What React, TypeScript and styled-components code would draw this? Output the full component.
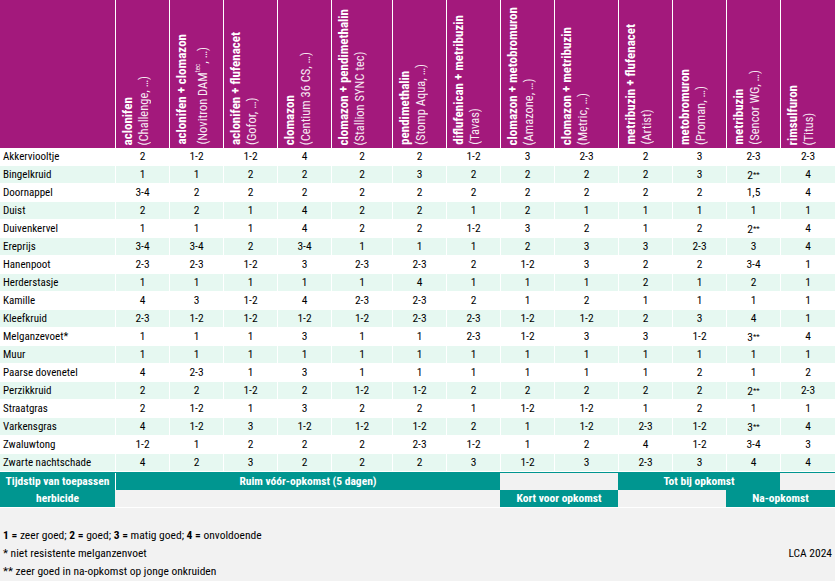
import React from 'react';
import styled, { createGlobalStyle } from 'styled-components';

const GlobalStyle = createGlobalStyle`
  body {
    margin: 0;
    background: #f2f2f2;
    font-family: Roboto, "Liberation Sans", sans-serif;
    font-stretch: 75%;
    color: #000;
  }
`;

const colTemplate = '115px 54px 54px 54px 54px 61px 54px 54px 54px 64px 54px 54px 54px 55px';

const Sheet = styled.div`
    width: 835px;
`

const HeadRow = styled.div`
    display: grid;
    grid-template-columns: ${colTemplate};
    grid-template-rows: 148px;
    height: 148px;
`

const Corner = styled.div`
    background: #a3197c;
`

const HeadCell = styled.div`
    background: #a3197c;
    border-left: 1px solid #fff;
    display: flex;
    align-items: flex-end;
    padding: 0 0 3px 4px;
    min-height: 0;
    overflow: hidden;
`

const Vertical = styled.div`
    writing-mode: vertical-rl;
    transform: rotate(180deg);
    white-space: nowrap;
    line-height: 16px;
    color: #fff;
`

const Agent = styled.span`
    display: block;
    font-weight: bold;
    font-size: 13px;
`

const Product = styled.span`
    display: block;
    font-size: 12.5px;
    color: #f7eaf3;

    sup {
        font-size: 7px;
    }
`

const Row = styled.div<{ $alt: boolean }>`
    display: grid;
    grid-template-columns: ${colTemplate};
    height: 18px;
    box-sizing: border-box;
    border-bottom: 1px solid #fff;
    background: ${props => props.$alt ? '#e6f8f1' : '#fff'};
`

const Label = styled.div`
    padding-left: 3px;
    font-size: 11px;
    line-height: 17px;
    white-space: nowrap;
`

const Value = styled.div`
    border-left: 1px solid #fff;
    text-align: center;
    font-size: 11.5px;
    line-height: 17px;
    white-space: nowrap;
`

const Stars = styled.span`
    font-size: 8px;
    vertical-align: 2px;
`

const Footer = styled.div`
    display: grid;
    grid-template-columns: ${colTemplate};
    grid-template-rows: 17px 17px;
    border-top: 1px solid #009690;
    border-bottom: 1px solid #fff;
`

const Band = styled.div<{ $col: string; $row: string; $on?: boolean; $divider?: boolean }>`
    grid-column: ${props => props.$col};
    grid-row: ${props => props.$row};
    background: ${props => props.$on ? '#009690' : 'transparent'};
    border-left: ${props => props.$divider ? '1px solid #fff' : 'none'};
    color: #fff;
    font-weight: bold;
    font-size: 11.5px;
    line-height: 17px;
    text-align: center;
    white-space: nowrap;
`

const Legend = styled.div`
    padding: 18px 3px 0 3px;
    font-size: 11.5px;
    line-height: 18px;
`

const LegendLine = styled.div`
    display: flex;
    justify-content: space-between;
`

const columns: [string, React.ReactNode][] = [
    ['aclonifen', '(Challenge, …)'],
    ['aclonifen + clomazon', <>(Novitron DAM<sup>tec</sup>, …)</>],
    ['aclonifen + flufenacet', '(Gofor, …)'],
    ['clomazon', '(Centium 36 CS, …)'],
    ['clomazon + pendimethalin', '(Stallion SYNC tec)'],
    ['pendimethalin', '(Stomp Aqua, …)'],
    ['diflufenican + metribuzin', '(Tavas)'],
    ['clomazon + metobromuron', '(Amazone, …)'],
    ['clomazon + metribuzin', '(Metric, …)'],
    ['metribuzin + flufenacet', '(Artist)'],
    ['metobromuron', '(Proman, …)'],
    ['metribuzin', '(Sencor WG, …)'],
    ['rimsulfuron', '(Titus)'],
];

const weeds: [string, string][] = [
    ['Akkerviooltje', '2 1-2 1-2 4 2 2 1-2 3 2-3 2 3 2-3 2-3'],
    ['Bingelkruid', '1 1 2 2 2 3 2 2 2 2 3 2** 4'],
    ['Doornappel', '3-4 2 2 2 2 2 2 2 2 2 2 1,5 4'],
    ['Duist', '2 2 1 4 2 2 1 2 1 1 1 1 1'],
    ['Duivenkervel', '1 1 1 4 2 2 1-2 3 2 1 2 2** 4'],
    ['Ereprijs', '3-4 3-4 2 3-4 1 1 1 2 3 3 2-3 3 4'],
    ['Hanenpoot', '2-3 2-3 1-2 3 2-3 2-3 2 1-2 3 2 2 3-4 1'],
    ['Herderstasje', '1 1 1 1 1 4 1 1 1 2 1 2 1'],
    ['Kamille', '4 3 1-2 4 2-3 2-3 2 1 2 1 1 1 1'],
    ['Kleefkruid', '2-3 1-2 1-2 1-2 1-2 2-3 2-3 1-2 1-2 2 3 4 1'],
    ['Melganzevoet*', '1 1 1 3 1 1 2-3 1-2 3 3 1-2 3** 4'],
    ['Muur', '1 1 1 1 1 1 1 1 1 1 1 1 1'],
    ['Paarse dovenetel', '4 2-3 1 3 1 1 1 1 1 1 2 1 2'],
    ['Perzikkruid', '2 2 1-2 2 1-2 1-2 2 2 2 2 2 2** 2-3'],
    ['Straatgras', '2 1-2 1 3 2 2 1 1-2 1-2 1 2 1 1'],
    ['Varkensgras', '4 1-2 3 1-2 1-2 1-2 2 1 1-2 2-3 1-2 3** 4'],
    ['Zwaluwtong', '1-2 1 2 2 2 2-3 1-2 1 2 4 1-2 3-4 3'],
    ['Zwarte nachtschade', '4 2 3 2 2 2 3 1-2 3 2-3 3 4 4'],
];

const Score: React.FC<{ value: string }> = ({ value }) => {
    if (value.endsWith('**')) {
        return <>{value.slice(0, -2)}<Stars>**</Stars></>
    }
    return <>{value}</>
}

const App: React.FC = () => {
    return (
        <Sheet>
            <GlobalStyle />
            <HeadRow>
                <Corner />
                {columns.map(([agent, product]) => (
                    <HeadCell key={agent}>
                        <Vertical>
                            <Agent>{agent}</Agent>
                            <Product>{product}</Product>
                        </Vertical>
                    </HeadCell>
                ))}
            </HeadRow>

            {weeds.map(([name, scores], i) => (
                <Row key={name} $alt={i % 2 === 1}>
                    <Label>{name}</Label>
                    {scores.split(' ').map((s, j) => (
                        <Value key={j}><Score value={s} /></Value>
                    ))}
                </Row>
            ))}

            <Footer>
                <Band $col="1" $row="1 / 3" $on>Tijdstip van toepassen<br />herbicide</Band>
                <Band $col="2 / 9" $row="1" $on $divider>Ruim vóór-opkomst (5 dagen)</Band>
                <Band $col="9 / 11" $row="1" />
                <Band $col="11 / 14" $row="1" $on>Tot bij opkomst</Band>
                <Band $col="14" $row="1" />
                <Band $col="2 / 9" $row="2" />
                <Band $col="9 / 11" $row="2" $on>Kort voor opkomst</Band>
                <Band $col="11 / 13" $row="2" />
                <Band $col="13 / 15" $row="2" $on>Na-opkomst</Band>
            </Footer>

            <Legend>
                <LegendLine>
                    <span><b>1 =</b> zeer goed; <b>2 =</b> goed; <b>3 =</b> matig goed; <b>4 =</b> onvoldoende</span>
                </LegendLine>
                <LegendLine>
                    <span>* niet resistente melganzenvoet</span>
                    <span>LCA 2024</span>
                </LegendLine>
                <LegendLine>
                    <span>** zeer goed in na-opkomst op jonge onkruiden</span>
                </LegendLine>
            </Legend>
        </Sheet>
    )
}

export default App
